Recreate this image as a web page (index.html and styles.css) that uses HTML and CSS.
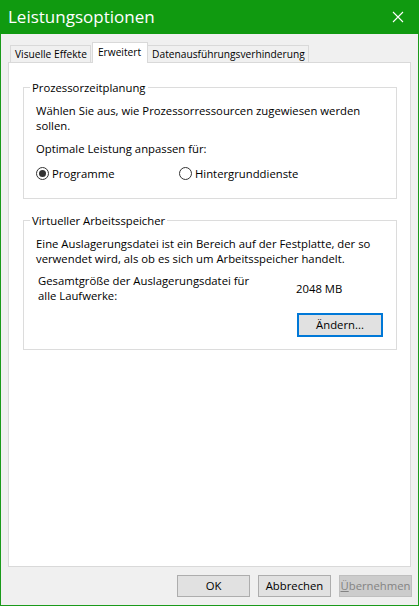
FILE: index.html
```html
<!DOCTYPE html>
<html lang="de">
<head>
<meta charset="utf-8">
<title>Leistungsoptionen</title>
<link rel="stylesheet" href="styles.css">
</head>
<body>
<div class="window">
  <div class="titlebar">
    <span class="title">Leistungsoptionen</span>
    <svg class="close" width="12" height="12" viewBox="0 0 12 12"><path d="M1 1 L11 11 M11 1 L1 11" stroke="#ffffff" stroke-width="1.1" fill="none"/></svg>
  </div>
  <div class="client">
    <div class="tabs">
      <div class="tab">Visuelle Effekte</div>
      <div class="tab selected">Erweitert</div>
      <div class="tab">Datenausführungsverhinderung</div>
    </div>
    <div class="panel">
      <fieldset class="group group-cpu">
        <legend>Prozessorzeitplanung</legend>
        <div class="group-body">
          <p class="text">Wählen Sie aus, wie Prozessorressourcen zugewiesen werden<br>sollen.</p>
          <p class="text gap">Optimale Leistung anpassen für:</p>
          <div class="radios">
            <label class="radio first"><span class="dot checked"></span>Programme</label>
            <label class="radio"><span class="dot"></span>Hintergrunddienste</label>
          </div>
        </div>
      </fieldset>
      <fieldset class="group group-mem">
        <legend>Virtueller Arbeitsspeicher</legend>
        <div class="group-body">
          <p class="text">Eine Auslagerungsdatei ist ein Bereich auf der Festplatte, der so<br>verwendet wird, als ob es sich um Arbeitsspeicher handelt.</p>
          <div class="size-row">
            <span class="size-label">Gesamtgröße der Auslagerungsdatei für<br>alle Laufwerke:</span>
            <span class="size-value">2048 MB</span>
          </div>
          <div class="btn-row">
            <button class="btn focused">Ändern...</button>
          </div>
        </div>
      </fieldset>
    </div>
    <div class="footer">
      <button class="btn">OK</button>
      <button class="btn">Abbrechen</button>
      <button class="btn disabled"><u>Ü</u>bernehmen</button>
    </div>
  </div>
</div>
</body>
</html>
```
FILE: styles.css
```css
html, body {
  margin: 0;
  padding: 0;
  background: #f0f0f0;
}
body {
  font-family: "Open Sans", "Noto Sans", "Liberation Sans", sans-serif;
  font-size: 11.3px;
  color: #000;
}
.window {
  width: 419px;
  height: 606px;
  box-sizing: border-box;
  border: 1px solid #1a9a1a;
  border-top: 0;
  display: flex;
  flex-direction: column;
  background: #f0f0f0;
}
.titlebar {
  height: 34px;
  flex: none;
  background: #109a10;
  display: flex;
  align-items: center;
  justify-content: space-between;
  padding: 0 15px 0 8px;
  margin: 0 -1px;
}
.title {
  color: #ffffff;
  font-size: 17px;
  line-height: 34px;
  font-family: "Open Sans", "Noto Sans", sans-serif;
  padding-bottom: 1px;
}
.close {
  display: block;
}
.client {
  flex: 1;
  display: flex;
  flex-direction: column;
  padding: 8px 7px 0 7px;
  min-height: 0;
}
.tabs {
  height: 20px;
  display: flex;
  align-items: flex-end;
  padding-left: 2px;
  position: relative;
  z-index: 1;
  font-size: 10.2px;
}
.tab {
  height: 17px;
  box-sizing: border-box;
  border: 1px solid #d9d9d9;
  border-bottom: 0;
  background: #f0f0f0;
  padding: 0 3px 0 4px;
  line-height: 16px;
  white-space: nowrap;
}
.tab + .tab {
  margin-left: -1px;
}
.tab.selected {
  height: 21px;
  margin-bottom: -1px;
  margin-left: 1px;
  background: #ffffff;
  padding: 0 6px 0 5px;
  line-height: 18px;
  position: relative;
  z-index: 2;
}
.tab.selected + .tab {
  margin-left: -1px;
}
.panel {
  flex: 1;
  background: #ffffff;
  border: 1px solid #d9d9d9;
  padding: 0 13px 0 14px;
}
.group {
  margin: 17px 0 0 0;
  padding: 0;
  border: 1px solid #dcdcdc;
  min-width: 0;
}
.group legend {
  margin-left: 6px;
  padding: 0 2px;
  line-height: 15px;
}
.group-mem {
  margin-top: 14px;
}
.group-body {
  padding: 8px 12px 17px 12px;
}
.group-mem .group-body {
  padding-bottom: 12px;
}
.text {
  margin: 0;
  line-height: 15px;
}
.text.gap {
  margin-top: 8px;
}
.radios {
  display: flex;
  margin-top: 10px;
  line-height: 15px;
}
.radio {
  display: flex;
  align-items: center;
}
.radio.first {
  width: 143px;
}
.dot {
  width: 13px;
  height: 13px;
  box-sizing: border-box;
  border: 1px solid #333333;
  border-radius: 50%;
  background: #ffffff;
  margin-right: 3px;
  display: flex;
  align-items: center;
  justify-content: center;
}
.dot.checked::after {
  content: "";
  width: 7px;
  height: 7px;
  border-radius: 50%;
  background: #333333;
}
.size-row {
  display: flex;
  align-items: center;
  margin-top: 8px;
  padding-left: 2px;
}
.size-label {
  width: 258px;
  line-height: 14.5px;
}
.size-value {
  line-height: 15px;
}
.btn-row {
  display: flex;
  justify-content: flex-end;
  margin-top: 10px;
  padding-right: 1px;
}
.btn {
  font: inherit;
  color: #000;
  background: #e1e1e1;
  border: 1px solid #adadad;
  border-radius: 0;
  height: 22px;
  width: 73px;
  padding: 0;
  line-height: 18px;
  margin: 0;
}
.btn.focused {
  width: 86px;
  height: 24px;
  border: 2px solid #0078d7;
}
.footer {
  height: 38px;
  flex: none;
  display: flex;
  justify-content: flex-end;
  align-items: flex-start;
  gap: 8px;
  padding-top: 8px;
  box-sizing: border-box;
  margin-right: -1px;
}
.btn.disabled {
  background: #cccccc;
  border-color: #bfbfbf;
  color: #838383;
}
.btn.disabled u {
  text-decoration: underline;
}
```
